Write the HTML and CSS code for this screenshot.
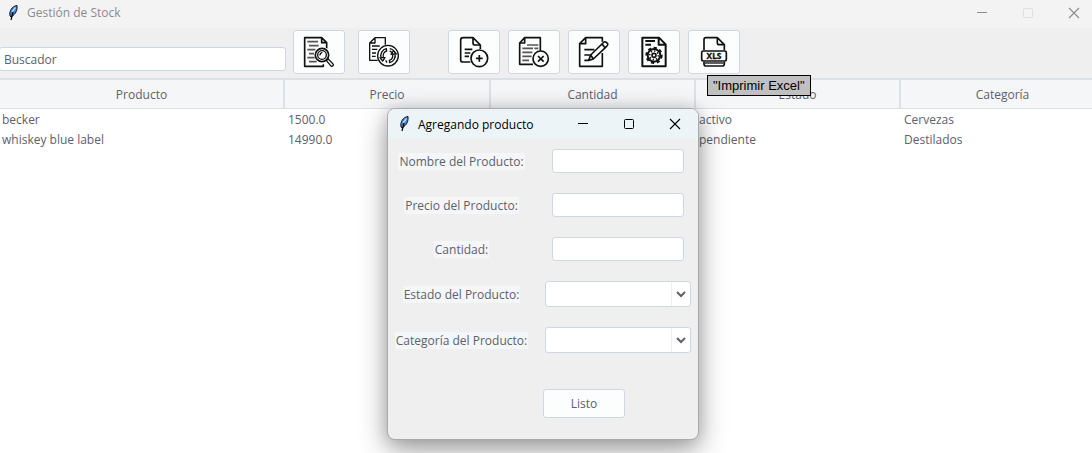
FILE: index.html
```html
<!DOCTYPE html>
<html lang="es">
<head>
<meta charset="utf-8">
<title>Gestión de Stock</title>
<link rel="stylesheet" href="styles.css">
</head>
<body>
<svg class="defs" aria-hidden="true">
  <symbol id="feather" viewBox="0 0 10 16">
    <path d="M2 11C1 6 4 1 9 0.5C9.500 5 8 9 3 12Z" fill="#3f83d6" stroke="#101820" stroke-width="1"/>
    <path d="M7.500 2.500L4 7" stroke="#b9dcf5" stroke-width="1.400" fill="none"/>
    <path d="M5 7L3 15" stroke="#000" stroke-width="1.200" fill="none"/>
  </symbol>
  <symbol id="minimize" viewBox="0 0 12 12"><path d="M1 5.500H11" fill="none" stroke="currentColor"/></symbol>
  <symbol id="maximize" viewBox="0 0 12 12"><rect x="1.500" y="1.500" width="9" height="9" rx="1" fill="none" stroke="currentColor"/></symbol>
  <symbol id="close" viewBox="0 0 12 12"><path d="M1 1L11 11M11 1L1 11" fill="none" stroke="currentColor" stroke-width="1.100"/></symbol>
</svg>

<main class="app">
  <header class="titlebar main-bar">
    <svg class="feather"><use href="#feather"/></svg>
    <h1 class="title">Gestión de Stock</h1>
    <div class="controls">
      <button class="control" aria-label="Minimizar"><svg><use href="#minimize"/></svg></button>
      <button class="control" aria-label="Maximizar" disabled><svg><use href="#maximize"/></svg></button>
      <button class="control" aria-label="Cerrar"><svg><use href="#close"/></svg></button>
    </div>
  </header>

  <div class="toolbar">
    <input class="search" type="text" value="Buscador" aria-label="Buscador">
    <div class="tools tools-search">
      <button class="tool" aria-label="Buscar">
        <svg viewBox="0 0 90 90">
          <path d="M58 82V88H2V2H53L68 17V34M53 2V17H68"/>
          <path class="soft" d="M10 14H42M15 26H44M10 38H34M15 50H30M10 62H32M15 74H38"/>
          <circle cx="54" cy="54" r="20"/><circle class="thin" cx="54" cy="54" r="13"/>
          <path class="thin" d="M48 55A7 7 0 0 1 55 47M67 71L73 66L88 82Q89 87 82 88Z"/>
        </svg>
      </button>
      <button class="tool" aria-label="Actualizar">
        <svg viewBox="0 0 90 90">
          <path class="thin" d="M26 70H2V18L18 2H49V23M18 2V18H2M9 27H32M9 37H25M9 48H21M9 58H20"/>
          <circle class="thin" cx="57" cy="56" r="31"/>
          <path class="thin" d="M36 62A22 22 0 0 1 52 35L53 42A15 15 0 0 0 43 60M33 62H48L41 72ZM62 35A22 22 0 0 1 79 51M62 42A15 15 0 0 1 72 52M78 50A22 22 0 0 1 62 77L61 70A15 15 0 0 0 71 54M66 52L74 41L82 51ZM50 70L54 77"/>
        </svg>
      </button>
    </div>
    <div class="tools">
      <button class="tool" aria-label="Agregar producto">
        <svg viewBox="0 0 90 90">
          <path d="M34 75H12Q5 75 5 68V9Q5 2 12 2H42L64 24V36M42 2V17Q42 24 49 24H64M17 37H40M17 48H34M17 58H30"/>
          <circle cx="61" cy="64" r="25"/><path d="M61 54V74M51 64H71"/>
        </svg>
      </button>
      <button class="tool" aria-label="Eliminar producto">
        <svg viewBox="0 0 90 90">
          <path d="M42 82H2V18L17 2H64V41M17 2V18H2"/>
          <path class="soft" d="M24 24H58M10 34H42M46 34H58M10 46H40M10 58H38M10 70H30"/>
          <circle cx="65" cy="65" r="23"/><path d="M57 57L74 74M74 57L57 74"/>
        </svg>
      </button>
      <button class="tool" aria-label="Editar producto">
        <svg viewBox="0 0 90 90">
          <path d="M70 14V2H20L2 20V88H70V48M20 2V20H2M16 38H46M16 54H36M16 70H28"/>
          <path d="M29 70L35 54L75 15Q81 13 86 20Q88 25 83 28L43 66ZM35 54L43 66M69 21L78 32"/>
        </svg>
      </button>
      <button class="tool" aria-label="Configurar">
        <svg viewBox="0 0 90 90">
          <path class="bold" d="M10 2H60L80 22V88H10ZM59 2V23H80M19 12H48M19 23H36"/>
          <circle class="teeth" cx="45" cy="55" r="22"/><circle class="bold" cx="45" cy="55" r="19"/>
          <circle class="spokes" cx="45" cy="55" r="13"/>
          <circle cx="45" cy="55" r="6"/>
        </svg>
      </button>
      <div class="tool-wrap">
        <button class="tool" aria-label="Imprimir Excel" aria-describedby="tip">
          <svg viewBox="0 0 90 90">
            <path d="M15 40V8Q15 2 21 2H55L76 23V40M55 2V17Q55 23 61 23H76M15 74V81Q15 87 21 87H70Q76 87 76 81V74"/>
            <path class="thin" d="M17 78H74"/>
            <rect x="8" y="42" width="74" height="30" rx="5"/>
            <text x="45" y="66" text-anchor="middle">XLS</text>
          </svg>
        </button>
        <span class="tooltip" id="tip" role="tooltip">"Imprimir Excel"</span>
      </div>
    </div>
  </div>

  <div class="table-view">
    <table class="stock">
      <colgroup><col class="col-name"><col class="col-price"><col><col><col></colgroup>
      <thead><tr><th>Producto</th><th>Precio</th><th>Cantidad</th><th>Estado</th><th>Categoría</th></tr></thead>
      <tbody>
        <tr><td>becker</td><td>1500.0</td><td></td><td>activo</td><td>Cervezas</td></tr>
        <tr><td>whiskey blue label</td><td>14990.0</td><td></td><td>pendiente</td><td>Destilados</td></tr>
      </tbody>
    </table>
  </div>
</main>

<section class="dialog" role="dialog" aria-labelledby="dialog-title">
  <header class="titlebar">
    <svg class="feather"><use href="#feather"/></svg>
    <h2 class="title" id="dialog-title">Agregando producto</h2>
    <div class="controls">
      <button class="control" aria-label="Minimizar"><svg><use href="#minimize"/></svg></button>
      <button class="control" aria-label="Maximizar"><svg><use href="#maximize"/></svg></button>
      <button class="control" aria-label="Cerrar"><svg><use href="#close"/></svg></button>
    </div>
  </header>
  <form class="form">
    <label for="nombre">Nombre del Producto:</label><input class="field" id="nombre" type="text">
    <label for="precio">Precio del Producto:</label><input class="field" id="precio" type="text">
    <label for="cantidad">Cantidad:</label><input class="field" id="cantidad" type="text">
    <label for="estado">Estado del Producto:</label>
    <div class="combo">
      <select id="estado"><option></option><option>activo</option><option>pendiente</option></select>
      <svg class="arrow" viewBox="0 0 18 24"><path d="M5 10L9 14L13 10"/></svg>
    </div>
    <label for="categoria">Categoría del Producto:</label>
    <div class="combo">
      <select id="categoria"><option></option><option>Cervezas</option><option>Destilados</option></select>
      <svg class="arrow" viewBox="0 0 18 24"><path d="M5 10L9 14L13 10"/></svg>
    </div>
    <div class="actions"><button class="submit" type="button">Listo</button></div>
  </form>
</section>
</body>
</html>
```
FILE: styles.css
```css
* { box-sizing: border-box; }

body {
  margin: 0;
  min-height: 100vh;
  overflow: hidden;
  background: #fff;
  color: #5c616c;
  font: 12px/17px "Open Sans", "Noto Sans", sans-serif;
}

button, input, select { font: inherit; color: inherit; margin: 0; }
.defs { position: absolute; width: 0; height: 0; }

.titlebar {
  display: flex;
  align-items: center;
  height: 28px;
  padding-left: 8px;
  background: #f3f3f3;
  color: #8c8c8c;
}
.main-bar { height: 28px; padding-bottom: 3px; }
.feather { width: 10px; height: 16px; margin-right: 9px; }
.title { margin: 0; font-size: 12px; font-weight: 400; }
.controls { display: flex; margin-left: auto; }
.main-bar .controls { margin-right: -5px; }
.control {
  display: grid;
  place-items: center;
  width: 46px;
  height: 24px;
  padding: 0;
  border: 0;
  background: none;
}
.control svg { width: 12px; height: 12px; }
.control:disabled { color: #dedede; }

.toolbar {
  display: flex;
  align-items: flex-start;
  height: 50px;
  padding-top: 2px;
  background: #efefef;
}
.search {
  width: 287px;
  height: 24px;
  margin: 17px 7px 0 -1px;
  padding: 0 4px;
  border: 1px solid #cfd6e6;
  border-radius: 3px;
  background: #fff;
}
.tools { display: flex; gap: 8px; }
.tools-search { gap: 13px; margin-right: 38px; }
.tool {
  display: grid;
  place-items: center;
  width: 52px;
  height: 44px;
  padding: 0;
  border: 1px solid #cfd6e6;
  border-radius: 3px;
  background: #fcfdfd;
}
.tool svg {
  width: 30px;
  height: 30px;
  overflow: visible;
  fill: none;
  stroke: #111;
  stroke-width: 5;
  stroke-linejoin: round;
}
.tool .thin { stroke-width: 4; }
.tool .bold { stroke-width: 6; }
.tool .soft { stroke: #555; }
.tool .teeth { stroke-width: 8; stroke-dasharray: 9 8; }
.tool .spokes { stroke-width: 5; stroke-dasharray: 4 6; }
.tool text { fill: #111; stroke: #111; stroke-width: 1; font: 700 25px "Noto Sans", sans-serif; }

.tool-wrap { position: relative; }
.tooltip {
  position: absolute;
  z-index: 1;
  top: 45px;
  left: 19px;
  padding: 1px 5px;
  border: 1px solid #000;
  background: #c0c0c0;
  color: #000;
  font: 13px/17px "Liberation Sans", Arial, sans-serif;
  white-space: nowrap;
}

.table-view { overflow: hidden; }
.stock {
  width: calc(100% + 14px);
  table-layout: fixed;
  border-collapse: separate;
  border-spacing: 0;
}
.col-name { width: 285px; }
.col-price { width: 206px; }
.stock th {
  height: 31px;
  padding: 0;
  border: solid #dce1e8;
  border-width: 2px 2px 1px 0;
  background: #f5f6f8;
  font-weight: 400;
}
.stock td { height: 20px; padding: 0 3px; }
.stock td:first-child { padding-left: 2px; }

.dialog {
  position: absolute;
  z-index: 2;
  top: 108px;
  left: 387px;
  width: 312px;
  border: 1px solid #a8abad;
  border-radius: 8px;
  background: #efefef;
  box-shadow: 0 10px 28px rgba(0, 0, 0, .38), 0 0 14px rgba(0, 0, 0, .12);
}
.dialog .titlebar {
  height: 30px;
  padding-left: 11px;
  border-radius: 7px 7px 0 0;
  background: #ecf4f8;
  color: #000;
}
.form {
  display: grid;
  grid-template-columns: 127px 146px;
  column-gap: 20px;
  row-gap: 20px;
  place-items: center;
  padding: 10px 7px 21px 10px;
}
.form label { padding: 0 1px; background: #f5f6f8; white-space: nowrap; }
.field {
  width: 132px;
  height: 24px;
  padding: 0 4px;
  border: 1px solid #cfd6e6;
  border-radius: 3px;
  background: #fff;
}
.combo { position: relative; width: 100%; height: 26px; }
.combo select {
  width: 100%;
  height: 100%;
  padding: 0 22px 0 4px;
  border: 1px solid #cfd6e6;
  border-radius: 3px;
  background: #fff;
  appearance: none;
}
.arrow {
  position: absolute;
  top: 1px;
  right: 1px;
  width: 19px;
  height: 24px;
  border-left: 1px solid #eceef2;
  fill: none;
  stroke: #5c616c;
  stroke-width: 2;
  pointer-events: none;
}
.actions { grid-column: 1 / -1; justify-self: end; padding: 16px 66px 0 0; }
.submit {
  display: block;
  width: 82px;
  height: 29px;
  padding: 0;
  border: 1px solid #cfd6e6;
  border-radius: 3px;
  background: #fcfdfd;
}
```
